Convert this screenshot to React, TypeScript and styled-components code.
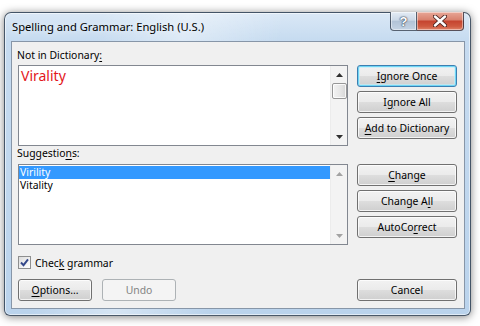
import styled, { createGlobalStyle, css } from "styled-components";

const GlobalStyle = createGlobalStyle`
  html, body {
    margin: 0;
    padding: 0;
    background: #ffffff;
  }
  body {
    font-family: "Noto Sans", "Open Sans", sans-serif;
    font-size: 10.4px;
    color: #000000;
  }
`;

const Page = styled.div`
  width: 480px;
  height: 326px;
  overflow: hidden;
  box-sizing: border-box;
  padding: 12px 0 0 4px;
`;

const Window = styled.div`
  width: 467px;
  height: 304px;
  box-sizing: border-box;
  display: flex;
  flex-direction: column;
  padding: 0 5px 6px 6px;
  border: 1px solid rgba(38, 52, 70, 0.8);
  border-radius: 7px 7px 6px 6px;
  background:
    linear-gradient(104deg, rgba(255, 255, 255, 0) 18%, rgba(255, 255, 255, 0.4) 34%, rgba(255, 255, 255, 0) 52%),
    linear-gradient(180deg, #dae8f6 0%, #c6dbf0 9%, #bad3ec 100%);
  box-shadow: 0 1px 9px rgba(0, 0, 0, 0.5), inset 0 0 0 1px rgba(255, 255, 255, 0.55);
`;

const TitleBar = styled.div`
  height: 28px;
  display: flex;
  align-items: flex-start;
  justify-content: space-between;
  margin-right: 1px;
`;

const Title = styled.div`
  padding: 6px 0 0 1px;
  font-size: 11.2px;
  line-height: 16px;
  color: #000;
  text-shadow: 0 0 6px rgba(255, 255, 255, 0.9);
`;

const CaptionButtons = styled.div`
  display: flex;
  margin-top: -1px;
`;

const CaptionButton = styled.div<{ $close?: boolean }>`
  height: 19px;
  box-sizing: border-box;
  display: flex;
  align-items: center;
  justify-content: center;
  border: 1px solid rgba(40, 52, 70, 0.75);
  border-top: none;
  box-shadow: inset 0 0 0 1px rgba(255, 255, 255, 0.45);
  ${(p) =>
    p.$close
      ? css`
          width: 47px;
          border-left: none;
          border-radius: 0 0 4px 0;
          background: linear-gradient(180deg, #e8a797 0%, #d98370 42%, #c64530 52%, #cf5a40 80%, #e0846a 100%);
        `
      : css`
          width: 27px;
          border-radius: 0 0 0 4px;
          background: linear-gradient(180deg, #e4ecf5 0%, #cbd8e7 45%, #b2c3d7 52%, #c4d3e4 100%);
        `}
`;

const HelpGlyph = styled.span`
  font-family: "Liberation Sans", sans-serif;
  font-weight: bold;
  font-size: 13px;
  line-height: 13px;
  color: #ffffff;
  text-shadow: 0 0 1px #3c4b5e, 0 0 1px #3c4b5e, 0 0 2px #3c4b5e;
`;

const Client = styled.div`
  flex: 1;
  box-sizing: border-box;
  border: 1px solid #8796a8;
  background: #f0f0f0;
  padding: 6px 7px 0 6px;
  display: flex;
  flex-direction: column;
`;

const Section = styled.div`
  display: grid;
  grid-template-columns: 330px 100px;
  column-gap: 9px;
`;

const Label = styled.div<{ $gap: number }>`
  grid-column: 1;
  line-height: 15px;
  margin-bottom: ${(p) => p.$gap}px;
  margin-left: -1px;
`;

const Key = styled.span`
  text-decoration: underline;
  text-underline-offset: 2px;
`;

const Box = styled.div`
  grid-column: 1;
  height: 81px;
  box-sizing: border-box;
  border: 1px solid #828790;
  background: #ffffff;
  display: flex;
`;

const BoxBody = styled.div`
  flex: 1;
  padding: 1px 0 0 0;
  overflow: hidden;
`;

const Misspelled = styled.div`
  color: #e3161b;
  font-size: 14px;
  line-height: 16px;
  padding: 1px 0 0 2px;
`;

const Item = styled.div<{ $selected?: boolean }>`
  line-height: 13px;
  height: 13px;
  padding-left: 1px;
  ${(p) =>
    p.$selected &&
    css`
      background: #3399ff;
      color: #ffffff;
    `}
`;

const ScrollBar = styled.div`
  width: 17px;
  display: flex;
  flex-direction: column;
  background: #f3f3f3;
  border-left: 1px solid #ececec;
  box-sizing: border-box;
`;

const ArrowBox = styled.div`
  height: 17px;
  display: flex;
  align-items: center;
  justify-content: center;
`;

const Track = styled.div`
  flex: 1;
  display: flex;
  flex-direction: column;
  align-items: center;
`;

const Thumb = styled.div`
  width: 15px;
  height: 16px;
  box-sizing: border-box;
  border: 1px solid #979797;
  border-radius: 2px;
  background: linear-gradient(90deg, #f3f3f3 0%, #e8e8e8 50%, #d6d6d6 100%);
  box-shadow: inset 0 0 0 1px rgba(255, 255, 255, 0.8);
`;

const Buttons = styled.div`
  grid-column: 2;
  display: flex;
  flex-direction: column;
  gap: 4px;
  align-self: start;
`;

const Button = styled.div<{ $default?: boolean; $disabled?: boolean; $width?: number }>`
  width: ${(p) => (p.$width ? `${p.$width}px` : "100%")};
  height: 22px;
  box-sizing: border-box;
  display: flex;
  align-items: center;
  justify-content: center;
  border: 1px solid #707070;
  border-radius: 3px;
  background: linear-gradient(180deg, #f2f2f2 0%, #ebebeb 48%, #dddddd 52%, #cfcfcf 100%);
  box-shadow: inset 0 0 0 1px rgba(255, 255, 255, 0.75);
  line-height: 15px;
  ${(p) =>
    p.$default &&
    css`
      border-color: #3c7fb1;
      box-shadow: inset 0 0 0 1px #6fd6f6, inset 0 0 0 2px rgba(190, 238, 252, 0.6);
    `}
  ${(p) =>
    p.$disabled &&
    css`
      border-color: #adb2b5;
      background: #f4f4f4;
      box-shadow: none;
      color: #838383;
    `}
`;

const CheckRow = styled.div`
  display: flex;
  align-items: center;
  gap: 4px;
  margin-top: 11px;
  height: 13px;
`;

const CheckBox = styled.div`
  width: 13px;
  height: 13px;
  box-sizing: border-box;
  border: 1px solid #8e8f8f;
  background: linear-gradient(135deg, #dcdcdc 0%, #f6f6f6 70%, #ffffff 100%);
  display: flex;
  align-items: center;
  justify-content: center;
`;

const BottomRow = styled(Section)`
  margin-top: 10px;
`;

const LeftButtons = styled.div`
  display: flex;
  gap: 10px;
`;

const Arrow = ({ up, disabled }: { up?: boolean; disabled?: boolean }) => (
  <svg width="7" height="4" viewBox="0 0 7 4">
    <path
      d={up ? "M0 4 L3.5 0 L7 4 Z" : "M0 0 L3.5 4 L7 0 Z"}
      fill={disabled ? "#a3a3a3" : "#303030"}
    />
  </svg>
);

const CloseGlyph = () => (
  <svg width="14" height="12" viewBox="0 0 14 12">
    <path d="M2 1.5 L12 10.5 M12 1.5 L2 10.5" stroke="#4a2420" strokeWidth="4.2" strokeLinecap="round" />
    <path d="M2 1.5 L12 10.5 M12 1.5 L2 10.5" stroke="#ffffff" strokeWidth="2.4" strokeLinecap="round" />
  </svg>
);

const CheckMark = () => (
  <svg width="9" height="9" viewBox="0 0 9 9">
    <path d="M1 4.5 L3.5 7.2 L8 1.3" fill="none" stroke="#34488a" strokeWidth="1.9" />
  </svg>
);

const suggestions = ["Virility", "Vitality"];

export default function App() {
  return (
    <>
      <GlobalStyle />
      <Page>
        <Window>
          <TitleBar>
            <Title>Spelling and Grammar: English (U.S.)</Title>
            <CaptionButtons>
              <CaptionButton>
                <HelpGlyph>?</HelpGlyph>
              </CaptionButton>
              <CaptionButton $close>
                <CloseGlyph />
              </CaptionButton>
            </CaptionButtons>
          </TitleBar>
          <Client>
            <Section>
              <Label $gap={2}>
                Not in Dictionary<Key>:</Key>
              </Label>
              <Box>
                <BoxBody>
                  <Misspelled>Virality</Misspelled>
                </BoxBody>
                <ScrollBar>
                  <ArrowBox>
                    <Arrow up />
                  </ArrowBox>
                  <Track>
                    <Thumb />
                  </Track>
                  <ArrowBox>
                    <Arrow />
                  </ArrowBox>
                </ScrollBar>
              </Box>
              <Buttons>
                <Button $default>
                  <span>
                    <Key>I</Key>gnore Once
                  </span>
                </Button>
                <Button>
                  <span>
                    I<Key>g</Key>nore All
                  </span>
                </Button>
                <Button>
                  <span>
                    <Key>A</Key>dd to Dictionary
                  </span>
                </Button>
              </Buttons>
            </Section>
            <Section>
              <Label $gap={3}>
                Suggestio<Key>n</Key>s:
              </Label>
              <Box>
                <BoxBody>
                  {suggestions.map((s, i) => (
                    <Item key={s} $selected={i === 0}>
                      {s}
                    </Item>
                  ))}
                </BoxBody>
                <ScrollBar>
                  <ArrowBox>
                    <Arrow up disabled />
                  </ArrowBox>
                  <Track />
                  <ArrowBox>
                    <Arrow disabled />
                  </ArrowBox>
                </ScrollBar>
              </Box>
              <Buttons>
                <Button>
                  <span>
                    <Key>C</Key>hange
                  </span>
                </Button>
                <Button>
                  <span>
                    Change A<Key>l</Key>l
                  </span>
                </Button>
                <Button>
                  <span>
                    AutoCo<Key>r</Key>rect
                  </span>
                </Button>
              </Buttons>
            </Section>
            <CheckRow>
              <CheckBox>
                <CheckMark />
              </CheckBox>
              <span>
                Chec<Key>k</Key> grammar
              </span>
            </CheckRow>
            <BottomRow>
              <LeftButtons>
                <Button $width={74}>
                  <span>
                    <Key>O</Key>ptions...
                  </span>
                </Button>
                <Button $width={74} $disabled>
                  Undo
                </Button>
              </LeftButtons>
              <Button>Cancel</Button>
            </BottomRow>
          </Client>
        </Window>
      </Page>
    </>
  );
}
